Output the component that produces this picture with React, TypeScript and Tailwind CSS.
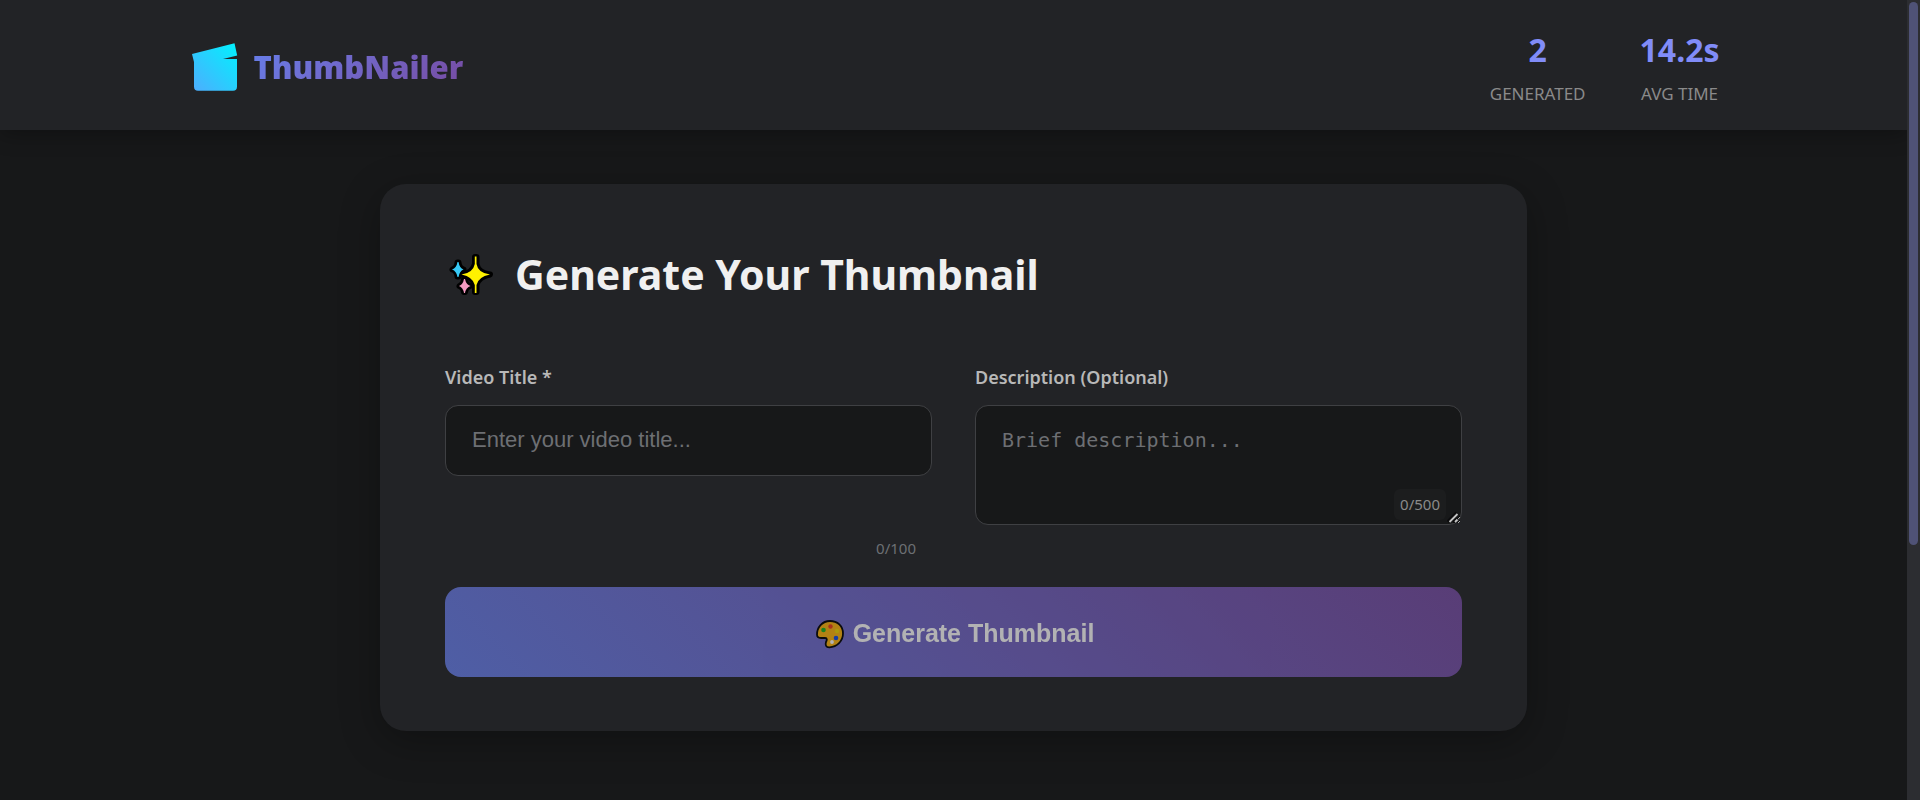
import React, { useState } from "react";

function ClapperLogo() {
  return (
    <svg className="h-[50px] w-[48px] shrink-0" viewBox="0 0 48 50" aria-hidden="true">
      <defs>
        <linearGradient id="clapper" x1="0" y1="1" x2="1" y2="0">
          <stop offset="0" stopColor="#4facfe" />
          <stop offset="1" stopColor="#00f2fe" />
        </linearGradient>
      </defs>
      <path
        fill="url(#clapper)"
        d="M0 12 42.500 1.300 45.200 13.500 31 17H45V44.500Q45 48.800 41 48.800H6Q2 48.800 2 44.500V20Z"
      />
    </svg>
  );
}

function Sparkles() {
  return (
    <svg className="h-[44px] w-[54px] shrink-0 overflow-visible" viewBox="0 0 54 44" aria-hidden="true">
      <g stroke="#000" strokeWidth="6" strokeLinejoin="round">
        <path d="M30 5H31.500V12Q33 21 45 22.500Q33 25 31.500 33V40H30V33Q28 25 17 22.500Q28 21 30 12Z" />
        <path d="M12.500 10.500H13.500Q14 16 18.500 17.500Q14 19 13.500 24.500H12.500Q12 19 7.500 17.500Q12 16 12.500 10.500Z" />
        <path d="M19 27.500H20Q20.500 32.500 25 34Q20.500 35.500 20 40H19Q18.500 35.500 14.500 34Q18.500 32.500 19 27.500Z" />
      </g>
      <path fill="#fff100" d="M29.800 4.500H31.500V12Q33 21 45 22.500Q33 25 31.500 33V41H29.800V33Q28 25 16.500 22.500Q28 21 29.800 12Z" />
      <path fill="#37c9f5" d="M12.500 10H13.500Q14.500 16 18.500 17.500Q14.500 19 13.500 25H12.500Q11.500 19 7 17.500Q11.500 16 12.500 10Z" />
      <path fill="#f49ac1" d="M19 27H20Q21 32.500 25.500 34Q21 35.500 20 41H19Q18 35.500 14 34Q18 32.500 19 27Z" />
    </svg>
  );
}

function Palette() {
  return (
    <svg className="h-[30px] w-[30px] shrink-0" viewBox="0 0 30 30" aria-hidden="true">
      <path
        d="M15 2C7 2 2 8.500 2 15.500C2 18.500 4 19 6 19H10C12.500 19 12 21 11 23C10 26 11 28.500 14.500 28.300C22 28 28 22 28 14.500C28 7 22.500 2 15 2Z"
        fill="#ffb60b"
        stroke="#000"
        strokeWidth="1.800"
      />
      <circle cx="15.500" cy="7.500" r="2.200" fill="#f03a17" />
      <circle cx="8.500" cy="11" r="2.300" fill="#16b51c" />
      <circle cx="22" cy="12" r="2.200" fill="#f5d800" />
      <circle cx="21" cy="19" r="2.300" fill="#0f4be8" />
      <circle cx="17" cy="23" r="1.900" fill="#fff" />
    </svg>
  );
}

function ResizeGrip() {
  return (
    <svg
      className="pointer-events-none absolute right-[3px] bottom-[2px] h-3 w-3"
      viewBox="0 0 12 12"
      fill="none"
      aria-hidden="true"
    >
      <path d="M1 11 10 2M6 11 10 7" stroke="#0c0c0d" strokeWidth="4" />
      <path d="M2.500 11 10.500 3M8 11 10.500 8.500" stroke="#c4c4c4" strokeWidth="1.800" />
    </svg>
  );
}

function Stat({ value, label }: { value: string; label: string }) {
  return (
    <div className="text-center">
      <div className="text-[32px] leading-[44px] font-bold text-[#818cf8]">{value}</div>
      <div className="mt-[10px] text-[17px] leading-6 text-[#8a8a8a] uppercase">{label}</div>
    </div>
  );
}

export default function App() {
  const [title, setTitle] = useState("");
  const [description, setDescription] = useState("");

  return (
    <div className="flex min-h-screen bg-[#171819] font-['Noto_Sans',sans-serif]">
      <div className="min-w-0 flex-1">
        <header className="bg-[#222326] shadow-[0_4px_20px_rgba(0,0,0,0.3)]">
          <div className="mx-auto flex h-[130px] max-w-[1532px] items-center justify-between pt-1 pl-1">
            <a href="#" className="flex items-center gap-[14px]">
              <ClapperLogo />
              <span className="bg-linear-135 from-[#667eea] to-[#764ba2] bg-clip-text font-['Open_Sans',sans-serif] text-[31px] leading-[44px] font-extrabold text-transparent">
                ThumbNailer
              </span>
            </a>
            <div className="flex gap-[54px]">
              <Stat value="2" label="Generated" />
              <Stat value="14.2s" label="Avg Time" />
            </div>
          </div>
        </header>

        <main className="px-4 py-[54px]">
          <section className="mx-auto max-w-[1147px] rounded-[26px] bg-[#222326] px-[65px] py-[54px] shadow-[0_10px_40px_rgba(0,0,0,0.3)]">
            <h2 className="flex items-center gap-4 text-[41px] leading-[72px] font-bold text-[#f0f0f0]">
              <Sparkles />
              Generate Your Thumbnail
            </h2>
            <form className="mt-[52px]" onSubmit={(e) => e.preventDefault()}>
              <div className="grid grid-cols-2 gap-[43px]">
                <div className="flex flex-col">
                  <label htmlFor="title" className="text-lg leading-[30px] font-semibold text-[#b8b8b8]">
                    Video Title *
                  </label>
                  <input
                    id="title"
                    maxLength={100}
                    value={title}
                    onChange={(e) => setTitle(e.target.value)}
                    placeholder="Enter your video title..."
                    className="mt-[13px] h-[71px] w-full rounded-[13px] border border-[#3f4043] bg-[#171819] px-[26px] pb-[2px] font-['Liberation_Sans',sans-serif] text-[22px] text-[#f0f0f0] outline-none placeholder:text-[#6d6f73]"
                  />
                  <div className="mt-auto pr-4 text-right text-[15px] leading-6 text-[#6d7074]">{title.length}/100</div>
                </div>
                <div className="flex flex-col pb-[35px]">
                  <label htmlFor="description" className="text-lg leading-[30px] font-semibold text-[#b8b8b8]">
                    Description (Optional)
                  </label>
                  <div className="relative mt-[13px] flex">
                    <textarea
                      id="description"
                      maxLength={500}
                      value={description}
                      onChange={(e) => setDescription(e.target.value)}
                      placeholder="Brief description..."
                      className="h-[120px] w-full resize-y rounded-[13px] border border-[#3f4043] bg-[#171819] px-[26px] py-[20px] font-['DejaVu_Sans_Mono',monospace] text-[20px] leading-[28px] text-[#f0f0f0] outline-none placeholder:text-[#6d6f73]"
                    />
                    <span className="pointer-events-none absolute right-4 bottom-[5px] rounded-md bg-[#1c1d1e] px-1.5 text-[15px] leading-[31px] text-[#8a8a8a]">
                      {description.length}/500
                    </span>
                    <ResizeGrip />
                  </div>
                </div>
              </div>
              <button
                type="submit"
                className="mt-[27px] flex h-[90px] w-full items-center justify-center gap-2 rounded-2xl bg-linear-45 from-[#667eea] to-[#764ba2] pt-1 pl-[2px] font-['Liberation_Sans',sans-serif] text-[25px] font-bold text-white opacity-65"
              >
                <Palette />
                Generate Thumbnail
              </button>
            </form>
          </section>
        </main>
      </div>
      <div className="w-[13px] shrink-0 bg-[#2c2d31] px-[2px]" aria-hidden="true">
        <div className="mt-[2px] h-[543px] rounded-full bg-[#4f5276]" />
      </div>
    </div>
  );
}
